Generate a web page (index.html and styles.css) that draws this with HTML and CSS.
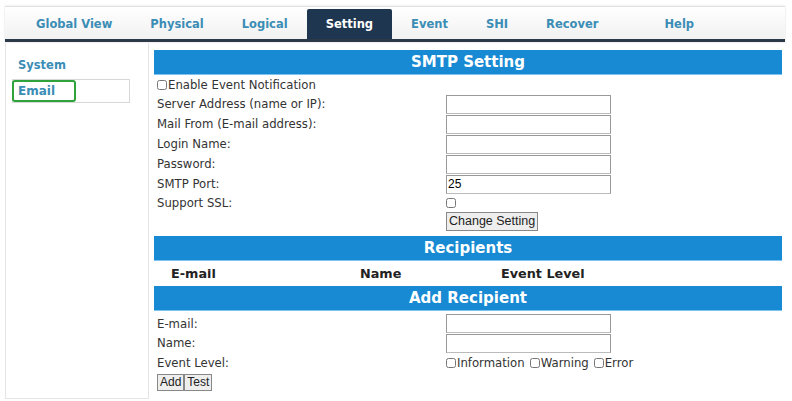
FILE: index.html
```html
<!DOCTYPE html>
<html lang="en">
  <head>
    <meta charset="UTF-8" />
    <title>Setting - Email</title>
    <link rel="stylesheet" href="styles.css">
  </head>
  <body>
    <div class="tabs">
      <span class="tab first">Global View</span>
      <span class="tab">Physical</span>
      <span class="tab">Logical</span>
      <span class="tab active">Setting</span>
      <span class="tab">Event</span>
      <span class="tab">SHI</span>
      <span class="tab">Recover</span>
      <span class="tab help">Help</span>
    </div>

    <div class="content">
      <div class="sidebar">
        <div class="side-item">System</div>
        <div class="side-item selected"><span class="mark">Email</span></div>
      </div>

      <div class="main">
        <div class="section-head">SMTP Setting</div>
        <label class="check-line"><input type="checkbox" />Enable Event Notification</label>
        <div class="form smtp">
          <span>Server Address (name or IP):</span>
          <input type="text" class="field" />
          <span>Mail From (E-mail address):</span>
          <input type="text" class="field" />
          <span>Login Name:</span>
          <input type="text" class="field" />
          <span>Password:</span>
          <input type="password" class="field" />
          <span>SMTP Port:</span>
          <input type="text" class="field" value="25" />
          <span>Support SSL:</span>
          <span><input type="checkbox" class="box" /></span>
          <span></span>
          <span><button class="btn">Change Setting</button></span>
        </div>

        <div class="section-head">Recipients</div>
        <div class="cols">
          <span class="c-mail">E-mail</span>
          <span class="c-name">Name</span>
          <span class="c-level">Event Level</span>
        </div>

        <div class="section-head">Add Recipient</div>
        <div class="form add">
          <span>E-mail:</span>
          <input type="text" class="field" />
          <span>Name:</span>
          <input type="text" class="field" />
          <span>Event Level:</span>
          <span class="levels">
            <label><input type="checkbox" />Information</label>
            <label><input type="checkbox" />Warning</label>
            <label><input type="checkbox" />Error</label>
          </span>
        </div>
        <div class="actions">
          <button class="btn">Add</button><button class="btn">Test</button>
        </div>
      </div>
    </div>
  </body>
</html>
```

FILE: styles.css
```css
body {
  margin: 0;
  padding: 6px 7px 0 5px;
  background: #fff;
  font-family: "DejaVu Sans", Verdana, sans-serif;
  font-size: 11.7px;
  color: #333;
}
.tabs {
  display: flex;
  height: 32px;
  border-top: 1px solid #e2e2e2;
  border-bottom: 3px solid #2c3a48;
  background: linear-gradient(#ffffff, #f1f1f1);
  box-shadow: 0 0 2px rgba(0, 0, 0, 0.15);
}
.tab {
  display: flex;
  align-items: center;
  padding: 0 19px;
  margin-top: 2px;
  color: #3b8db5;
  font-weight: bold;
  font-size: 11.5px;
}
.tab.first {
  margin-left: 12px;
}
.tab.help {
  margin-left: 28px;
}
.tab.active {
  background: #1f3650;
  color: #fff;
  border-radius: 2px 2px 0 0;
}
.content {
  display: flex;
  gap: 5px;
  margin-top: 1px;
}
.sidebar {
  width: 144px;
  height: 356px;
  border: 1px solid #e4e4e4;
  border-top: none;
  padding: 15px 0 0 6px;
  box-sizing: border-box;
}
.side-item {
  color: #3b8db5;
  font-weight: bold;
  font-size: 11.5px;
  padding-left: 6px;
  height: 19px;
}
.side-item.selected {
  width: 118px;
  height: 24px;
  padding: 1px 0 0;
  border: 1px solid #d8d8d8;
  box-sizing: border-box;
  margin-top: 2px;
  font-size: 12px;
}
.mark {
  display: inline-block;
  width: 64px;
  height: 22px;
  margin: -1px 0 0 -1px;
  padding-left: 4px;
  line-height: 18px;
  border: 2px solid #2fa23c;
  border-radius: 3px;
  box-sizing: border-box;
}
.main {
  width: 628px;
  padding-top: 7px;
}
.section-head {
  background: #188ad3;
  color: #fff;
  font-weight: bold;
  font-size: 15px;
  text-align: center;
  height: 24px;
  line-height: 24px;
  border-bottom: 1px solid #7cc4ef;
}
.check-line {
  display: flex;
  align-items: center;
  height: 18px;
  margin-top: 1px;
  padding-left: 3px;
}
input[type="checkbox"] {
  width: 10px;
  height: 10px;
  margin: 0 1px 0 0;
}
.form {
  display: grid;
  grid-template-columns: 289px 165px;
  align-items: center;
  padding-left: 3px;
}
.smtp {
  grid-template-rows: repeat(5, 20px) 17px 20px;
}
.field {
  width: 165px;
  height: 19px;
  box-sizing: border-box;
  margin: 0;
  border: 1px solid #999;
  border-bottom-color: #bbb;
  font-family: "Liberation Sans", Arial, sans-serif;
  font-size: 12px;
  padding: 0 1px;
}
.box {
  display: block;
  width: 11px;
  height: 11px;
}
.btn {
  font-family: "Liberation Sans", Arial, sans-serif;
  font-size: 12.5px;
  padding: 1px 2px;
  margin: 0;
  border: 1px solid #888;
  background: #eee;
  color: #222;
}
.form .btn {
  height: 19px;
}
.smtp + .section-head {
  margin-top: 5px;
}
.cols {
  display: flex;
  height: 25px;
  align-items: center;
  font-weight: bold;
  font-size: 12.8px;
  color: #222;
}
.c-mail {
  margin-left: 17px;
  width: 189px;
}
.c-name {
  width: 141px;
}
.add {
  margin-top: 3px;
  grid-auto-rows: 19.5px;
}
.levels {
  display: flex;
  align-items: center;
  gap: 5px;
  white-space: nowrap;
}
.levels label {
  display: flex;
  align-items: center;
}
.actions {
  padding-left: 3px;
  margin-top: 1px;
}
.actions .btn {
  height: 17px;
  padding: 0 2px;
  font-size: 12px;
}
```
